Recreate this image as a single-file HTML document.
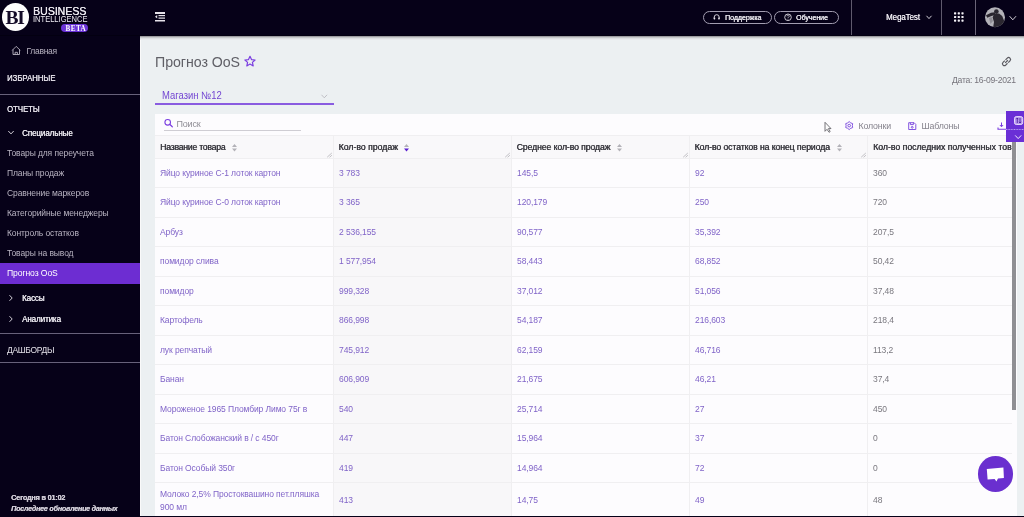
<!DOCTYPE html>
<html><head><meta charset="utf-8">
<style>
*{margin:0;padding:0;box-sizing:border-box}
html,body{width:1024px;height:517px;overflow:hidden;background:#060118;font-family:"Liberation Sans",sans-serif;position:relative}
#root{position:absolute;left:0;top:0;width:1024px;height:517px;overflow:hidden;will-change:transform;background:#060118}
.a{position:absolute}
.t{position:absolute;white-space:nowrap;line-height:10px;transform-origin:0 0}
.sb{color:#b9b4c2;font-size:8.5px;letter-spacing:-0.1px}
.cap{color:#e3e0e8;font-size:8.5px;transform:scaleX(0.91);letter-spacing:0px;text-shadow:0.3px 0 0 #e3e0e8}
.sub{color:#eceaf0;font-size:8.8px;letter-spacing:-0.15px;text-shadow:0.25px 0 0 #eceaf0}
.hr{position:absolute;left:0;width:140px;height:1px;background:#67617a}
.rl{position:absolute;left:155px;width:857px;height:1px;background:#f0eff1}
.cl{position:absolute;top:135px;width:1px;height:382px;background:#f0eff1}
.cv{color:#8064c8;font-size:8.5px;letter-spacing:-0.1px}
.cg{color:#7a787f;font-size:8.5px;letter-spacing:-0.1px}
.hd{color:#35343b;font-size:8.7px;letter-spacing:0px;text-shadow:0.4px 0 0 #35343b}
svg{position:absolute;overflow:visible}
</style></head><body><div id="root">
<!-- top bar -->
<div class="a" style="left:1.5px;top:3px;width:27.5px;height:28px;border-radius:50%;background:#fdfdfd"></div>
<div class="t" style="left:5.5px;top:10px;line-height:15px;font-family:'Liberation Serif',serif;font-weight:bold;font-size:19.5px;color:#140c28;letter-spacing:-1.2px">BI</div>
<div class="t" style="left:33px;top:5.8px;line-height:10px;font-size:11.4px;color:#eceaf0;transform:scaleX(0.925);text-shadow:0.3px 0 0 #eceaf0">BUSINESS</div>
<div class="t" style="left:33px;top:16px;line-height:8px;font-size:8.2px;color:#eceaf0;transform:scaleX(0.92)">INTELLIGENCE</div>
<div class="a" style="left:61px;top:24px;width:27px;height:8px;border-radius:4px;background:#6a33d6"></div>
<div class="t" style="left:65.5px;top:25.5px;line-height:6px;font-family:'Liberation Serif',serif;font-weight:bold;font-size:7.2px;color:#fff;letter-spacing:0.4px">BETA</div>
<svg style="left:0;top:0" width="1" height="1"><g fill="#e6e3ea"><rect x="155" y="12" width="10" height="2"/><rect x="158.5" y="15" width="6.5" height="1.2"/><rect x="158.5" y="17.5" width="6.5" height="1.2"/><path d="M155 16.8L157.2 15V18.6Z"/><rect x="155" y="20" width="10" height="1.5"/></g></svg>
<div class="a" style="left:703px;top:10.8px;width:68.6px;height:12.8px;border:1px solid #a29db0;border-radius:7px"></div>
<svg style="left:0;top:0" width="1" height="1"><g fill="none" stroke="#e6e3ea" stroke-width="0.9"><path d="M714.2 18.8V17.2A2.5 2.5 0 0 1 719.2 17.2V18.8"/></g><rect x="713.7" y="17.4" width="1.5" height="2" rx="0.4" fill="#e6e3ea"/><rect x="718.2" y="17.4" width="1.5" height="2" rx="0.4" fill="#e6e3ea"/></svg>
<div class="t" style="left:724.5px;top:12.5px;font-size:7.9px;color:#f0eef4;letter-spacing:-0.05px;text-shadow:0.35px 0 0 #f0eef4;transform:scaleX(0.89)">Поддержка</div>
<div class="a" style="left:774.3px;top:10.8px;width:64.5px;height:12.8px;border:1px solid #a29db0;border-radius:7px"></div>
<svg style="left:0;top:0" width="1" height="1"><circle cx="788" cy="17.3" r="3.3" fill="none" stroke="#e6e3ea" stroke-width="0.85"/><path d="M786.9 16.3A1.15 1.15 0 1 1 788.6 17.2Q788 17.6 788 18.2" fill="none" stroke="#e6e3ea" stroke-width="0.75"/><circle cx="788" cy="19.3" r="0.45" fill="#e6e3ea"/></svg>
<div class="t" style="left:795.5px;top:12.5px;font-size:7.9px;color:#f0eef4;letter-spacing:-0.05px;text-shadow:0.35px 0 0 #f0eef4;transform:scaleX(0.89)">Обучение</div>
<div class="a" style="left:851px;top:0;width:1px;height:36px;background:#5f5a6d"></div>
<div class="t" style="left:885.5px;top:12px;font-size:9px;color:#eae7ee;letter-spacing:-0.1px;text-shadow:0.3px 0 0 #eae7ee;transform:scaleX(0.885)">MegaTest</div>
<svg style="left:0;top:0" width="1" height="1"><path d="M926.5 15.8L929 18.6L931.5 15.8" fill="none" stroke="#e6e3ea" stroke-width="0.9"/></svg>
<div class="a" style="left:941px;top:0;width:1px;height:36px;background:#5f5a6d"></div>
<svg style="left:0;top:0" width="1" height="1"><g fill="#f4f2f7"><rect x="954" y="12.2" width="2.2" height="2.2" rx="0.6"/><rect x="957.7" y="12.2" width="2.2" height="2.2" rx="0.6"/><rect x="961.4" y="12.2" width="2.2" height="2.2" rx="0.6"/><rect x="954" y="15.9" width="2.2" height="2.2" rx="0.6"/><rect x="957.7" y="15.9" width="2.2" height="2.2" rx="0.6"/><rect x="961.4" y="15.9" width="2.2" height="2.2" rx="0.6"/><rect x="954" y="19.5" width="2.2" height="2.2" rx="0.6"/><rect x="957.7" y="19.5" width="2.2" height="2.2" rx="0.6"/><rect x="961.4" y="19.5" width="2.2" height="2.2" rx="0.6"/></g></svg>
<div class="a" style="left:975px;top:0;width:1px;height:36px;background:#6a6578"></div>
<svg style="left:0;top:0" width="1" height="1"><defs><clipPath id="av"><circle cx="995" cy="17.2" r="10"/></clipPath></defs><circle cx="995" cy="17.2" r="10" fill="#b3b2b8"/><g clip-path="url(#av)" fill="#2b2730"><path d="M986 15.3L991 12.8L994.8 12.3L995.5 14.8L991.5 16L987.2 17.8Z"/><circle cx="996.4" cy="11.6" r="2.3"/><path d="M994 14L999 13.4L1002.2 16L1004.2 21L1005.5 28H993L994 22L992.6 17.5Z"/><path d="M989 18L991.5 17L993 21L990.5 24Z" fill="#8f8d94"/></g><path d="M1009.6 16.2L1012.8 19.8L1016 16.2" fill="none" stroke="#e6e3ea" stroke-width="0.9"/></svg>
<!-- sidebar -->
<svg style="left:0;top:0" width="1" height="1"><path d="M12.2 50.4L16.2 46.4L20.3 50.4M13 49.6V54.5H19.5V49.6M15.1 54.5V52.3H17.4V54.5" fill="none" stroke="#b9b4c2" stroke-width="0.9"/></svg>
<div class="t sb" style="left:26.5px;top:46px;letter-spacing:-0.3px">Главная</div>
<div class="t cap" style="left:7px;top:73px">ИЗБРАННЫЕ</div>
<div class="hr" style="top:94px"></div>
<div class="t cap" style="left:7px;top:104px">ОТЧЕТЫ</div>
<svg style="left:0;top:0" width="1" height="1"><path d="M8.3 131L11 133.9L13.7 131" fill="none" stroke="#e6e3ea" stroke-width="0.9"/><path d="M9.5 295.2L12.2 298L9.5 300.8M9.5 316.2L12.2 319L9.5 321.8" fill="none" stroke="#e6e3ea" stroke-width="0.9"/></svg>
<div class="t sub" style="left:21.5px;top:127.5px;transform:scaleX(0.92)">Специальные</div>
<div class="t sb" style="left:7px;top:148px">Товары для переучета</div>
<div class="t sb" style="left:7px;top:168px">Планы продаж</div>
<div class="t sb" style="left:7px;top:188px">Сравнение маркеров</div>
<div class="t sb" style="left:7px;top:208px">Категорийные менеджеры</div>
<div class="t sb" style="left:7px;top:228px">Контроль остатков</div>
<div class="t sb" style="left:7px;top:248px">Товары на вывод</div>
<div class="a" style="left:0;top:263.2px;width:140px;height:20.6px;background:#6d2dd2"></div>
<div class="t" style="left:7px;top:268px;font-size:8.6px;color:#fff;letter-spacing:-0.1px">Прогноз OoS</div>
<div class="t sub" style="left:21.5px;top:293px;transform:scaleX(0.92)">Кассы</div>
<div class="t sub" style="left:21.5px;top:314px;transform:scaleX(0.92)">Аналитика</div>
<div class="hr" style="top:333px"></div>
<div class="t cap" style="left:7px;top:344.5px;transform:none;font-size:8.5px;letter-spacing:-0.3px;text-shadow:none">ДАШБОРДЫ</div>
<div class="hr" style="top:362px"></div>
<div class="t" style="left:11px;top:492.5px;font-size:7.3px;font-weight:bold;color:#d0ccd6;letter-spacing:-0.2px;text-shadow:0.3px 0 0 #d0ccd6">Сегодня в 01:02</div>
<div class="t" style="left:11px;top:503.5px;font-size:7.2px;font-weight:bold;font-style:italic;color:#d0ccd6;letter-spacing:-0.25px;text-shadow:0.3px 0 0 #d0ccd6">Последнее обновление данных</div>
<!-- main -->
<div class="a" style="left:140px;top:36px;width:884px;height:480px;background:#ecf0f2"></div>
<div class="a" style="left:140px;top:36px;width:1px;height:480px;background:#fafafa"></div>
<div class="a" style="left:0;top:35px;width:1024px;height:1px;background:#030011"></div><div class="a" style="left:140px;top:36px;width:884px;height:1px;background:#9d9da1"></div><div class="a" style="left:140px;top:37px;width:884px;height:1px;background:#c6c8ca"></div><div class="a" style="left:140px;top:38px;width:884px;height:1px;background:#dcdfe1"></div><div class="a" style="left:140px;top:39px;width:884px;height:1px;background:#e7eaec"></div>
<div class="t" style="left:155px;top:54px;line-height:16px;font-size:14.2px;color:#606067;letter-spacing:-0.05px">Прогноз OoS</div>
<svg style="left:0;top:0" width="1" height="1"><path d="M250 56.3L251.5 59.6L255.1 60L252.4 62.4L253.2 65.9L250 64.1L246.8 65.9L247.6 62.4L244.9 60L248.5 59.6Z" fill="none" stroke="#7b3fe0" stroke-width="1.2" stroke-linejoin="round"/></svg>
<div class="t" style="left:161.5px;top:90px;line-height:11px;font-size:10.4px;color:#7346d2;letter-spacing:0px;transform:scaleX(0.91)">Магазин №12</div>
<svg style="left:0;top:0" width="1" height="1"><path d="M321.5 94.8L324.3 97.8L327.1 94.8" fill="none" stroke="#b4b2ba" stroke-width="0.8"/></svg>
<div class="a" style="left:155px;top:102.6px;width:179px;height:2px;background:#8a5ce0"></div>
<svg style="left:0;top:0" width="1" height="1"><g fill="none" stroke="#5a5960" stroke-width="1.2" transform="rotate(-45 1006.5 61.6)"><path d="M1006 59.7H1003.5A1.9 1.9 0 0 0 1003.5 63.5H1006"/><path d="M1007 59.7H1009.5A1.9 1.9 0 0 1 1009.5 63.5H1007"/><path d="M1004.6 61.6H1008.4"/></g></svg>
<div class="t" style="left:952px;top:74.5px;font-size:8.6px;color:#76747c;letter-spacing:-0.25px">Дата: 16-09-2021</div>
<!-- panel -->
<div class="a" style="left:155px;top:114px;width:862px;height:402px;background:#fdfcfe"></div>
<svg style="left:0;top:0" width="1" height="1"><circle cx="167.7" cy="122.3" r="2.8" fill="none" stroke="#7b3fe0" stroke-width="1.1"/><path d="M169.7 124.3L172.3 126.8" stroke="#7b3fe0" stroke-width="1.2" stroke-linecap="round"/></svg>
<div class="t" style="left:176.5px;top:118.5px;font-size:9px;color:#8e8c94;letter-spacing:-0.2px">Поиск</div>
<div class="a" style="left:164px;top:130px;width:137px;height:1px;background:#cfcdd3"></div>
<svg style="left:0;top:0" width="1" height="1"><path d="M825 122.3V131.3L827 129.3L829 132.3L830.2 131.5L828.4 128.6H831Z" fill="#fbfbfb" stroke="#55545a" stroke-width="0.8" stroke-linejoin="round"/></svg>
<svg style="left:0;top:0" width="1" height="1"><g fill="none" stroke="#8455e0" stroke-width="1" stroke-linejoin="round"><path d="M849.20 121.60L850.75 122.92L852.66 123.60L852.30 125.60L852.66 127.60L850.75 128.28L849.20 129.60L847.65 128.28L845.74 127.60L846.10 125.60L845.74 123.60L847.65 122.92Z"/><circle cx="849.2" cy="125.6" r="1.3"/></g></svg>
<div class="t" style="left:858.5px;top:121px;font-size:8.8px;color:#85828c;letter-spacing:-0.15px">Колонки</div>
<svg style="left:0;top:0" width="1" height="1"><g fill="none" stroke="#8455e0" stroke-width="1" stroke-linejoin="round"><path d="M908.7 122.7H914.1L915.8 124.4V129.5H908.7Z"/><path d="M910.4 122.7V124.6H913.4V122.7"/><circle cx="912.2" cy="127.3" r="0.9"/></g></svg>
<div class="t" style="left:921.5px;top:121px;font-size:8.8px;color:#85828c;letter-spacing:-0.15px">Шаблоны</div>
<svg style="left:0;top:0" width="1" height="1"><path d="M1001.5 122.5V126.5M999.9 125L1001.5 126.8L1003.1 125" fill="none" stroke="#7b3fe0" stroke-width="1"/><path d="M998 127.5V129.3H1006" fill="none" stroke="#7b3fe0" stroke-width="1.1"/></svg>
<!-- table header -->
<div class="a" style="left:155px;top:135px;width:862px;height:23px;background:#f9f8fa"></div>
<div class="a" style="left:333px;top:158px;width:178px;height:358px;background:#f8f7f9"></div><div class="rl" style="top:135px"></div><div class="rl" style="top:158px"></div>
<div class="cl" style="left:333px"></div>
<div class="cl" style="left:511px"></div>
<div class="cl" style="left:689px"></div>
<div class="cl" style="left:867px"></div>
<div class="t hd" style="left:160px;top:142px;letter-spacing:-0.25px">Название товара</div>
<div class="t hd" style="left:338.5px;top:142px">Кол-во продаж</div>
<div class="t hd" style="left:516.5px;top:142px;letter-spacing:-0.1px">Среднее кол-во продаж</div>
<div class="t hd" style="left:694.5px;top:142px;letter-spacing:-0.1px">Кол-во остатков на конец периода</div>
<div class="a" style="left:868px;top:135px;width:144px;height:23px;overflow:hidden"><div class="t hd" style="left:5px;top:7px">Кол-во последних полученных товаров</div></div>
<svg style="left:0;top:0" width="1" height="1"><g fill="#b3b2b8"><path d="M232 147H237L234.5 144Z M232 148.6H237L234.5 151.6Z"/><path d="M404 147H409L406.5 144Z"/><path d="M617 147H622L619.5 144Z M617 148.6H622L619.5 151.6Z"/><path d="M837 147H842L839.5 144Z M837 148.6H842L839.5 151.6Z"/></g><path d="M404 148.6H409L406.5 151.6Z" fill="#5a1fd0"/>
<g stroke="#a9a8ae" stroke-width="0.7"><path d="M327.2 157.2L331.8 153M329.6 157.3L331.9 155.2"/><path d="M505.2 157.2L509.8 153M507.6 157.3L509.9 155.2"/><path d="M683.2 157.2L687.8 153M685.6 157.3L687.9 155.2"/><path d="M861.2 157.2L865.8 153M863.6 157.3L865.9 155.2"/></g></svg>
<div class="rl" style="top:187px"></div>
<div class="rl" style="top:217px"></div>
<div class="rl" style="top:246px"></div>
<div class="rl" style="top:276px"></div>
<div class="rl" style="top:305px"></div>
<div class="rl" style="top:335px"></div>
<div class="rl" style="top:364px"></div>
<div class="rl" style="top:394px"></div>
<div class="rl" style="top:423px"></div>
<div class="rl" style="top:453px"></div>
<div class="rl" style="top:482px"></div>
<div class="t cv" style="left:160px;top:167.8px">Яйцо куриное С-1 лоток картон</div>
<div class="t cv" style="left:339px;top:167.8px">3 783</div>
<div class="t cv" style="left:517px;top:167.8px">145,5</div>
<div class="t cv" style="left:695px;top:167.8px">92</div>
<div class="t cg" style="left:873px;top:167.8px">360</div>
<div class="t cv" style="left:160px;top:197.2px">Яйцо куриное С-0 лоток картон</div>
<div class="t cv" style="left:339px;top:197.2px">3 365</div>
<div class="t cv" style="left:517px;top:197.2px">120,179</div>
<div class="t cv" style="left:695px;top:197.2px">250</div>
<div class="t cg" style="left:873px;top:197.2px">720</div>
<div class="t cv" style="left:160px;top:226.8px">Арбуз</div>
<div class="t cv" style="left:339px;top:226.8px">2 536,155</div>
<div class="t cv" style="left:517px;top:226.8px">90,577</div>
<div class="t cv" style="left:695px;top:226.8px">35,392</div>
<div class="t cg" style="left:873px;top:226.8px">207,5</div>
<div class="t cv" style="left:160px;top:256.2px">помидор слива</div>
<div class="t cv" style="left:339px;top:256.2px">1 577,954</div>
<div class="t cv" style="left:517px;top:256.2px">58,443</div>
<div class="t cv" style="left:695px;top:256.2px">68,852</div>
<div class="t cg" style="left:873px;top:256.2px">50,42</div>
<div class="t cv" style="left:160px;top:285.8px">помидор</div>
<div class="t cv" style="left:339px;top:285.8px">999,328</div>
<div class="t cv" style="left:517px;top:285.8px">37,012</div>
<div class="t cv" style="left:695px;top:285.8px">51,056</div>
<div class="t cg" style="left:873px;top:285.8px">37,48</div>
<div class="t cv" style="left:160px;top:315.2px">Картофель</div>
<div class="t cv" style="left:339px;top:315.2px">866,998</div>
<div class="t cv" style="left:517px;top:315.2px">54,187</div>
<div class="t cv" style="left:695px;top:315.2px">216,603</div>
<div class="t cg" style="left:873px;top:315.2px">218,4</div>
<div class="t cv" style="left:160px;top:344.8px">лук репчатый</div>
<div class="t cv" style="left:339px;top:344.8px">745,912</div>
<div class="t cv" style="left:517px;top:344.8px">62,159</div>
<div class="t cv" style="left:695px;top:344.8px">46,716</div>
<div class="t cg" style="left:873px;top:344.8px">113,2</div>
<div class="t cv" style="left:160px;top:374.2px">Банан</div>
<div class="t cv" style="left:339px;top:374.2px">606,909</div>
<div class="t cv" style="left:517px;top:374.2px">21,675</div>
<div class="t cv" style="left:695px;top:374.2px">46,21</div>
<div class="t cg" style="left:873px;top:374.2px">37,4</div>
<div class="t cv" style="left:160px;top:403.8px">Мороженое 1965 Пломбир Лимо 75г в</div>
<div class="t cv" style="left:339px;top:403.8px">540</div>
<div class="t cv" style="left:517px;top:403.8px">25,714</div>
<div class="t cv" style="left:695px;top:403.8px">27</div>
<div class="t cg" style="left:873px;top:403.8px">450</div>
<div class="t cv" style="left:160px;top:433.2px">Батон Слобожанский в / с 450г</div>
<div class="t cv" style="left:339px;top:433.2px">447</div>
<div class="t cv" style="left:517px;top:433.2px">15,964</div>
<div class="t cv" style="left:695px;top:433.2px">37</div>
<div class="t cg" style="left:873px;top:433.2px">0</div>
<div class="t cv" style="left:160px;top:462.8px">Батон Особый 350г</div>
<div class="t cv" style="left:339px;top:462.8px">419</div>
<div class="t cv" style="left:517px;top:462.8px">14,964</div>
<div class="t cv" style="left:695px;top:462.8px">72</div>
<div class="t cg" style="left:873px;top:462.8px">0</div>
<div class="t cv" style="left:160px;top:488.5px">Молоко 2,5% Простоквашино пет.пляшка</div>
<div class="t cv" style="left:160px;top:501.5px">900 мл</div>
<div class="t cv" style="left:339px;top:495.0px">413</div>
<div class="t cv" style="left:517px;top:495.0px">14,75</div>
<div class="t cv" style="left:695px;top:495.0px">49</div>
<div class="t cg" style="left:873px;top:495.0px">48</div><!-- right tab & scrollbar -->
<div class="a" style="left:1017px;top:114px;width:7px;height:402px;background:#ecf0f2"></div>
<div class="a" style="left:1012px;top:141px;width:4px;height:269px;background:#8f8f93"></div>
<div class="a" style="left:1006px;top:111px;width:18px;height:31px;background:#6a2fd6"></div>
<svg style="left:0;top:0" width="1" height="1"><rect x="1014.5" y="116.6" width="8.2" height="7.9" rx="1.8" fill="#b896ee" stroke="#efe6fd" stroke-width="0.9"/><path d="M1017.3 118V123M1016.3 119.2L1017.3 118L1018.3 119.2M1020 118V123M1019 121.8L1020 123L1021 121.8" fill="none" stroke="#3f1897" stroke-width="0.8"/><path d="M1006 129.5H1024" stroke="#b79cf0" stroke-width="1" stroke-dasharray="1 0.6"/><path d="M1015.2 135.4L1018.2 138.6L1021.2 135.4" fill="none" stroke="#efe9fb" stroke-width="1"/></svg>
<div class="a" style="left:977.5px;top:456px;width:35.5px;height:35.5px;border-radius:50%;background:#6a2fcf"></div>
<svg style="left:0;top:0" width="1" height="1"><path d="M986.8 469L1003.4 467.5L1003.9 478L998 478.6L996.4 481.4L994.6 478.9L987.6 479.5Z" fill="#fff"/></svg>
<div class="a" style="left:0;top:516px;width:1024px;height:1px;background:#060118"></div>
</div></body></html>
